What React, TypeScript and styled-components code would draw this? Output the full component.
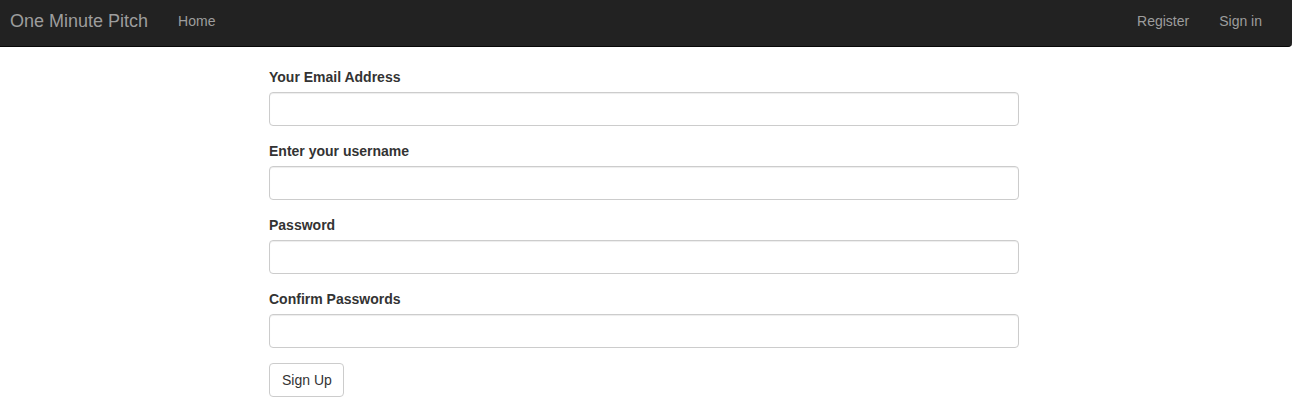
import React from "react";
import styled, { createGlobalStyle } from "styled-components";

const Global = createGlobalStyle`
  html, body { margin: 0; padding: 0; background: #fff; }
  body {
    font-family: "Liberation Sans", Arial, Helvetica, sans-serif;
    font-size: 14px;
    line-height: 1.42857143;
    color: #333;
  }
  * { box-sizing: border-box; }
`;

const Navbar = styled.nav`
  display: flex;
  align-items: stretch;
  justify-content: space-between;
  height: 47px;
  margin-bottom: 20px;
  background: #222;
  border-bottom: 1px solid #080808;
  border-radius: 0 0 4px 0;
  padding: 0 15px 0 0;
`;

const NavGroup = styled.div`
  display: flex;
  align-items: stretch;
`;

const Brand = styled.a`
  display: flex;
  align-items: center;
  padding: 0 15px 4px 10px;
  font-size: 18px;
  line-height: 20px;
  color: #9d9d9d;
  text-decoration: none;
`;

const NavLink = styled.a`
  display: flex;
  align-items: center;
  padding: 0 15px 4px;
  font-size: 14px;
  line-height: 20px;
  color: #9d9d9d;
  text-decoration: none;
`;

const Container = styled.div`
  width: 750px;
  margin-left: 269px;
`;

const FormGroup = styled.div`
  margin-bottom: 15px;
`;

const Label = styled.label`
  display: block;
  font-weight: 700;
  margin-bottom: 5px;
  line-height: 20px;
  color: #333;
`;

const Input = styled.input`
  display: block;
  width: 100%;
  height: 34px;
  padding: 6px 12px;
  font-size: 14px;
  border: 1px solid #ccc;
  border-radius: 4px;
  box-shadow: inset 0 1px 1px rgba(0, 0, 0, 0.075);
  background: #fff;
  font-family: inherit;
`;

const Button = styled.button`
  display: inline-block;
  height: 34px;
  padding: 6px 11px 6px 12px;
  font-size: 14px;
  line-height: 20px;
  font-family: inherit;
  color: #333;
  background: #fff;
  border: 1px solid #ccc;
  border-radius: 4px;
`;

const fields = [
  { label: "Your Email Address", type: "email" },
  { label: "Enter your username", type: "text" },
  { label: "Password", type: "password" },
  { label: "Confirm Passwords", type: "password" },
];

export default function App() {
  return (
    <>
      <Global />
      <Navbar>
        <NavGroup>
          <Brand href="#">One Minute Pitch</Brand>
          <NavLink href="#">Home</NavLink>
        </NavGroup>
        <NavGroup>
          <NavLink href="#">Register</NavLink>
          <NavLink href="#">Sign in</NavLink>
        </NavGroup>
      </Navbar>
      <Container>
        <form onSubmit={(e) => e.preventDefault()}>
          {fields.map((f) => (
            <FormGroup key={f.label}>
              <Label>{f.label}</Label>
              <Input type={f.type} />
            </FormGroup>
          ))}
          <Button type="submit">Sign Up</Button>
        </form>
      </Container>
    </>
  );
}
